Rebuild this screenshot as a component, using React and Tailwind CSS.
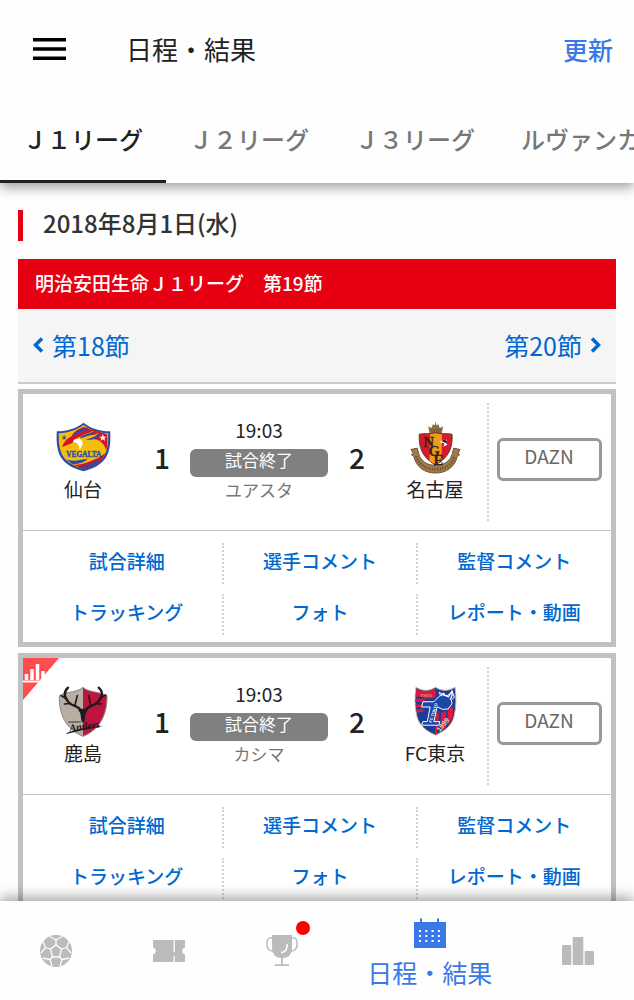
import React, { useState } from 'react';

const TABS = ['Ｊ１リーグ', 'Ｊ２リーグ', 'Ｊ３リーグ', 'ルヴァンカップ'];

const LINKS = ['試合詳細', '選手コメント', '監督コメント', 'トラッキング', 'フォト', 'レポート・動画'];

const SendaiCrest = () => (
  <svg viewBox="136 97 164 150" className="w-[55px] h-[50px]" aria-hidden="true">
    <path d="M218 99C196 116 172 124 138 125C136 155 138 182 150 203C164 225 190 238 218 245C246 238 272 225 286 203C298 182 300 155 298 125C264 124 240 116 218 99Z" fill="#2c4ba8" />
    <path d="M218 106C197 121 174 129 144 131C143 156 145 180 156 199C169 219 192 231 218 238C244 231 267 219 280 199C291 180 293 156 292 131C262 129 239 121 218 106Z" fill="#f5bd0c" />
    <path d="M182 140C190 124 205 116 220 112L254 124L288 133C291 151 290 166 286 183C282 160 262 146 240 148C256 144 264 136 262 128C258 137 240 138 229 136C243 133 249 128 246 123C238 130 222 131 208 141C200 142 194 148 190 156C180 162 168 166 154 172C160 156 168 147 182 140Z" fill="#d51228" />
    <path d="M184 137C200 121 216 116 233 113C225 127 205 128 190 139ZM207 143C224 132 241 130 250 124C250 137 228 138 211 146ZM224 148C246 146 258 137 264 129C272 142 250 151 232 150Z" fill="#2c4ba8" />
    <path d="M186 157C188 147 200 144 211 151C219 157 216 171 205 181C207 169 201 158 186 157Z" fill="#fff" />
    <path d="M184 224C210 230 244 213 266 203L284 190C276 214 250 231 218 238Z" fill="#d51228" />
    <path d="M165 209C188 219 214 208 232 207C217 221 195 225 183 222ZM199 233C225 229 249 219 264 207L259 220C246 229 232 234 218 237Z" fill="#2c4ba8" />
    <path d="M276 133L279 141L287 141L281 146L283 154L276 149L269 154L271 146L265 141L273 141Z" fill="#fff" />
    <path d="M160 135L162 141L168 141L163 145L165 151L160 147L155 151L157 145L152 141L158 141Z" fill="#2c4ba8" />
    <text x="219" y="203" textAnchor="middle" className="font-['Liberation_Serif'] text-[22px] font-bold" fill="#2c4ba8" stroke="#2c4ba8" strokeWidth="1">VEGALTA</text>
  </svg>
);

const NagoyaCrest = () => (
  <svg viewBox="90 92 152 160" className="w-[51px] h-[53px]" aria-hidden="true">
    <path d="M148 130L144 108L154 113L158 102L164 105L166 93L169 105L175 102L179 113L189 108L185 130Z" fill="#8d6c45" />
    <path d="M151 118L183 118M154 125L180 125" stroke="#4f3b24" strokeWidth="2" strokeDasharray="4 3" />
    <path d="M117 132C135 128 150 133 166 127C182 133 197 128 216 132C218 172 207 202 166 225C126 202 115 172 117 132Z" fill="#d9182a" stroke="#553b23" strokeWidth="3" />
    <path d="M150 131Q160 131 166 128Q177 133 186 132L184 213L166 223L148 213Z" fill="#f29a12" />
    <path d="M178 156Q187 144 203 149L193 153L202 163L190 170L193 159Z" fill="#fff" />
    <path d="M183 152L196 146L201 160Z" fill="#302526" />
    <path d="M92 178L111 174L115 190C122 214 142 226 166 226C190 226 211 214 217 190L221 174L240 178L234 190L239 194L232 197C225 232 198 249 166 249C134 249 107 232 100 197L93 194L99 190Z" fill="#a07b4d" stroke="#6f5330" strokeWidth="3" />
    <path d="M108 199C119 228 139 238 166 238C195 238 214 227 224 199" fill="none" stroke="#61472a" strokeWidth="9" strokeDasharray="3 5" />
    <g className="font-['Liberation_Serif'] font-bold" fill="#322324" stroke="#322324" strokeWidth="1">
      <text x="130" y="171" className="text-[44px]">N</text>
      <text x="145" y="197" className="text-[44px]">G</text>
      <text x="160" y="226" className="text-[44px]">E</text>
    </g>
  </svg>
);

const KashimaCrest = () => (
  <svg viewBox="143 122 150 153" className="w-[50px] h-[51px]" aria-hidden="true">
    <path d="M218 126C203 141 172 138 147 151C145 205 166 252 218 273Z" fill="#b9aea4" />
    <path d="M218 126C233 141 264 138 290 151C291 205 270 252 218 273Z" fill="#bd153f" />
    <path d="M218 126C203 141 172 138 147 151C145 205 166 252 218 273C270 252 291 205 290 151C264 138 233 141 218 126Z" fill="none" stroke="#8d8586" strokeWidth="3" />
    <g fill="none" stroke="#211b1d" strokeLinecap="round" strokeLinejoin="round">
      <path d="M213 198C207 181 187 184 176 172C164 159 157 142 173 127M223 198C229 181 249 184 261 172C276 158 281 141 265 127" strokeWidth="7" />
      <path d="M169 160L153 151M181 174L162 176M194 179L201 151M267 160L286 149M254 175L273 176M241 180L235 151" strokeWidth="5" />
    </g>
    <path d="M203 193Q218 187 233 193L226 204L223 226L218 233L213 226L210 204Z" fill="#211b1d" />
    <path d="M174 230H211" stroke="#4d4448" strokeWidth="4" strokeDasharray="4 1" />
    <text x="178" y="259" className="font-['Liberation_Serif'] text-[31px] font-bold italic" fill="#211b1d" transform="rotate(-8 178 259)">Antlers</text>
    <path d="M169 263Q213 244 280 241Q222 252 169 266Z" fill="#211b1d" />
  </svg>
);

const TokyoCrest = () => (
  <svg viewBox="100 124 130 150" className="w-[43px] h-[50px]" aria-hidden="true">
    <path d="M106 127C126 140 148 139 165 127C182 139 204 140 224 127C228 155 228 184 222 212C216 242 193 260 165 272C137 260 114 242 108 212C102 184 102 155 106 127Z" fill="#1c3d96" stroke="#d0b78a" strokeWidth="3" />
    <path d="M108 132C126 143 148 141 165 131V159L132 162L134 170L104 172V162H132V156H104Z" fill="#df173f" />
    <path d="M104 179H128V187H106ZM107 194H130L127 202H108Z" fill="#df173f" />
    <path d="M165 205H176L170 269L163 270ZM182 205L196 198V250L182 260ZM202 193L219 185L217 217L202 244Z" fill="#df173f" />
    <path d="M127 171H160L180 151L176 142L191 151L202 152L216 140L222 158L213 166L215 177L203 193L186 194L170 186L160 231H178L175 242H123L127 231H140L149 187H123Z" fill="#1c46a5" stroke="#fff" strokeWidth="3" strokeLinejoin="round" />
    <path d="M181 154Q193 139 190 151L204 156L215 139Q218 151 209 165" fill="none" stroke="#fff" strokeWidth="4" />
    <text x="0" y="0" className="font-['Liberation_Sans'] text-[12px] font-bold" fill="#fff" transform="translate(153 235) rotate(-72)">FC TOKYO</text>
    <text x="0" y="0" className="font-['Liberation_Sans'] text-[21px] font-bold" fill="#f1d8a7" transform="translate(178 263) rotate(-50)">1999</text>
    <text x="119" y="158" className="font-['Liberation_Sans'] text-[10px] font-bold" fill="#e7a86d">TOKYO</text>
  </svg>
);

const MATCHES = [
  { home: '仙台', away: '名古屋', venue: 'ユアスタ', HomeCrest: SendaiCrest, AwayCrest: NagoyaCrest },
  { home: '鹿島', away: 'FC東京', venue: 'カシマ', HomeCrest: KashimaCrest, AwayCrest: TokyoCrest, tracking: true },
];

const TrackingBadge = () => (
  <svg viewBox="0 0 36 42" className="absolute left-0 top-0 w-[36px] h-[42px]" aria-hidden="true">
    <path d="M0 0H36L0 42Z" fill="#ff4d4f" />
    <path d="M3.5 22V16M9 22V11M14.5 22V6M20 22V13" stroke="#fff" strokeWidth="3.5" />
    <path d="M0 23.5H20" stroke="#fff" strokeWidth="2" />
  </svg>
);

const Team = ({ name, Crest, className }) => (
  <div className={`pt-[26px] text-center ${className}`}>
    <div className="flex h-[54px] items-center justify-center">
      <Crest />
    </div>
    <p className="mt-px text-[19px] leading-7">{name}</p>
  </div>
);

const MatchCard = ({ match }) => (
  <article className="relative border-[5px] border-[#c1c1c1] bg-white">
    <div className="grid grid-cols-[120fr_38fr_156fr_40fr_110fr_124fr] h-[137px] border-b border-[#c1c1c1] text-[#222]">
      <Team name={match.home} Crest={match.HomeCrest} className="" />
      <p className="pt-12 text-center text-[28px] leading-[30px] font-medium">1</p>
      <div className="px-[9px] pt-[22px] text-center leading-7">
        <p className="text-[19px]">19:03</p>
        <p className="mt-[5px] h-7 rounded-md bg-[#808080] text-[17px] leading-[22px] text-white">試合終了</p>
        <p className="text-[17px] leading-[26px] text-[#777]">{match.venue}</p>
      </div>
      <p className="pt-12 text-center text-[28px] leading-[30px] font-medium">2</p>
      <Team name={match.away} Crest={match.AwayCrest} className="pl-1.5" />
      <div className="my-[9px] flex items-center justify-center border-l-2 border-dotted border-[#d0d0d0] pr-0.5 pb-[5px]">
        <button className="h-[43px] w-[105px] rounded-md border-3 border-[#999] pb-2 text-[19px] leading-7 text-[#666]">DAZN</button>
      </div>
    </div>
    <div className="grid grid-cols-3 gap-y-2.5 pt-3 pb-[7px] pl-2">
      {LINKS.map((link, i) => (
        <a
          key={link}
          href="#"
          className={`block h-[41px] text-center text-[19px] leading-9 font-medium text-[#0068d0] ${i % 3 < 2 ? 'border-r-2 border-dotted border-[#d0d0d0]' : ''}`}
        >
          {link}
        </a>
      ))}
    </div>
    {match.tracking && <TrackingBadge />}
  </article>
);

const BallIcon = () => (
  <svg viewBox="0 0 32 32" className="size-8" aria-hidden="true">
    <circle cx="16" cy="16" r="16" fill="#bbb" />
    <g fill="none" stroke="#fff" strokeWidth="1.3" strokeLinejoin="round">
      <path d="M16 10L21.5 14L19.5 22H12.5L10.5 14Z" />
      <path d="M16 10V5M10.5 14L5.5 12.5M21.5 14L26.5 12.5M12.5 22L10 24.5M19.5 22L22 24.5" />
      <path d="M16 5L10 1.5M16 5L22 1.5M5.5 12.5L3 6.5M5.5 12.5L1 18M26.5 12.5L29 6.5M26.5 12.5L31 18M10 24.5L3 23M10 24.5L12 31M22 24.5L29 23M22 24.5L20 31" />
    </g>
  </svg>
);

const TicketIcon = () => (
  <svg viewBox="0 0 32 22" className="h-[22px] w-8" aria-hidden="true">
    <path d="M0 0H32V7.5A3.6 3.6 0 0 0 32 14.5V22H0V14.5A3.6 3.6 0 0 0 0 7.5Z" fill="#bbb" />
    <path d="M21.2 0V12M21.2 16V22" stroke="#fff" strokeWidth="1.3" />
  </svg>
);

const TrophyIcon = () => (
  <svg viewBox="0 0 32 32" className="size-8" aria-hidden="true">
    <path d="M6 0H26V13Q26 23 16 23Q6 23 6 13Z" fill="#bbb" />
    <g fill="none" stroke="#bbb" strokeWidth="1.5">
      <path d="M7 3C2 2 .8 5 .8 9C.8 14 4 16.5 8 16M25 3C30 2 31.2 5 31.2 9C31.2 14 28 16.5 24 16" />
      <path d="M16 22V31M9 30.2H23" strokeWidth="1.8" />
    </g>
    <path d="M21 9V11Q21 17 15 17.5" fill="none" stroke="#fff" strokeWidth="1.6" />
  </svg>
);

const CalendarIcon = () => (
  <svg viewBox="0 0 32 30" className="h-[30px] w-8" aria-hidden="true">
    <path d="M0 4H6V1Q7 -1 8 1V4H23V1Q24 -1 25 1V4H32V30H0Z" fill="#3b78e7" />
    <path d="M5 13H28M5 18H28M5 23H28" stroke="#fff" strokeWidth="2" strokeDasharray="2 4.3" />
  </svg>
);

const StandingsIcon = () => (
  <svg viewBox="0 0 32 28" className="h-7 w-8" aria-hidden="true">
    <g fill="#bbb">
      <rect x="0" y="8" width="9.3" height="20" rx="1" />
      <rect x="10.7" y="0" width="10.6" height="28" rx="1" />
      <rect x="22.7" y="14" width="9.3" height="14" rx="1" />
    </g>
  </svg>
);

const App = () => {
  const [tab, setTab] = useState(0);

  return (
    <div className="flex h-screen flex-col overflow-hidden bg-[#fefefe] font-['Noto_Sans_CJK_JP',sans-serif] text-[#222]">
      <header className="relative z-10 shrink-0 bg-[#fefefe] shadow-[0_4px_12px_rgba(0,0,0,0.4)]">
        <div className="flex h-[98px] items-center px-[21px]">
          <button aria-label="メニュー" className="px-3 py-2">
            <svg viewBox="0 0 33 22" className="h-[22px] w-[33px]" aria-hidden="true">
              <path d="M0 1.75H33M0 11H33M0 20.25H33" stroke="#000" strokeWidth="3.5" />
            </svg>
          </button>
          <h1 className="ml-12 flex-1 text-[26px] leading-9">日程・結果</h1>
          <button className="text-[25px] leading-9 font-medium text-[#3b78e7]">更新</button>
        </div>
        <nav className="flex overflow-hidden">
          {TABS.map((name, i) => (
            <button
              key={name}
              onClick={() => setTab(i)}
              className={`h-[85px] shrink-0 border-b-3 px-[23px] text-[24px] leading-9 font-medium whitespace-nowrap ${i === tab ? 'border-[#231f23] text-[#222]' : 'border-transparent text-[#777]'}`}
            >
              {name}
            </button>
          ))}
        </nav>
      </header>

      <main className="min-h-0 flex-1 overflow-hidden px-[18px] pt-[27px]">
        <h2 className="h-[31px] border-l-5 border-[#e60012] pl-5 text-[24px] leading-[26px] font-medium text-[#333]">
          2018年8月1日(水)
        </h2>
        <h3 className="mt-[18px] h-[50px] bg-[#e60012] px-[17px] text-[19px] leading-12 font-medium text-white">
          明治安田生命Ｊ１リーグ　第19節
        </h3>
        <div className="flex h-[75px] items-center justify-between border-b-2 border-[#ccc] bg-[#f5f5f5] px-[15px] pb-0.5 text-[25px] leading-9 text-[#0068d0]">
          <a href="#" className="flex items-center gap-2">
            <svg viewBox="0 0 11 16" className="h-4 w-[11px]" aria-hidden="true">
              <path d="M9 1.5L2.5 8L9 14.5" fill="none" stroke="currentColor" strokeWidth="3.5" />
            </svg>
            第18節
          </a>
          <a href="#" className="flex items-center gap-2">
            第20節
            <svg viewBox="0 0 11 16" className="h-4 w-[11px]" aria-hidden="true">
              <path d="M2 1.5L8.5 8L2 14.5" fill="none" stroke="currentColor" strokeWidth="3.5" />
            </svg>
          </a>
        </div>
        <div className="mt-[5px] flex flex-col gap-1.5">
          {MATCHES.map((match) => (
            <MatchCard key={match.home} match={match} />
          ))}
        </div>
      </main>

      <footer className="relative z-10 shrink-0 bg-[#fefefe] shadow-[0_-4px_12px_rgba(0,0,0,0.35)]">
        <nav className="grid h-[99px] grid-cols-[113fr_113fr_113fr_183fr_113fr]">
          <a href="#" aria-label="試合" className="flex items-center justify-center"><BallIcon /></a>
          <a href="#" aria-label="チケット" className="flex items-center justify-center"><TicketIcon /></a>
          <a href="#" aria-label="大会" className="flex items-center justify-center">
            <span className="relative">
              <TrophyIcon />
              <span className="absolute -top-3.5 left-[30px] size-3.5 rounded-full bg-[#ff0000]" />
            </span>
          </a>
          <a href="#" className="flex flex-col items-center pt-[17px] text-[25px] leading-9 text-[#3b78e7]">
            <CalendarIcon />
            <span className="mt-1.5">日程・結果</span>
          </a>
          <a href="#" aria-label="順位表" className="flex items-center justify-center"><StandingsIcon /></a>
        </nav>
      </footer>
    </div>
  );
};

export default App;
